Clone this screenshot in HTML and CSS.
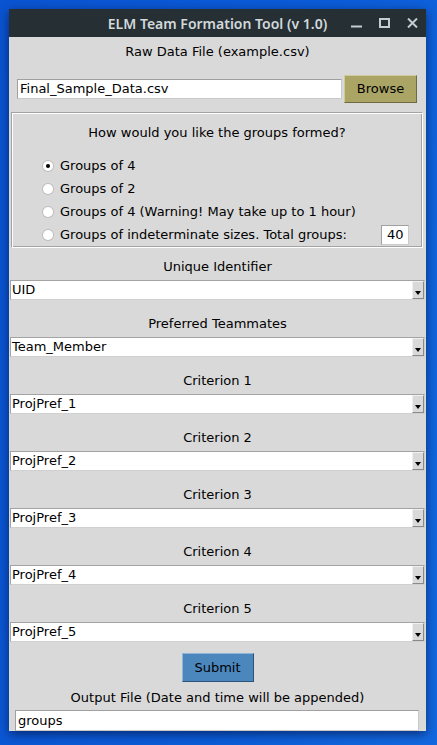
FILE: index.html
```html
<!DOCTYPE html>
<html>
<head>
<meta charset="utf-8">
<link rel="stylesheet" href="styles.css">
</head>
<body>
<div class="window">
  <div class="titlebar">
    <div></div>
    <div class="title">ELM Team Formation Tool (v 1.0)</div>
    <div class="controls">
      <svg class="ctl" width="11" height="10" viewBox="0 0 11 10"><rect x="0" y="7.5" width="11" height="2" fill="#c5cdd1"/></svg>
      <svg class="ctl" width="11" height="10" viewBox="0 0 11 10"><rect x="1" y="1" width="9" height="8" fill="none" stroke="#c5cdd1" stroke-width="2"/></svg>
      <svg class="ctl" width="11" height="10" viewBox="0 0 11 10"><path d="M1 0.5 L10 9.5 M10 0.5 L1 9.5" stroke="#c5cdd1" stroke-width="2" fill="none"/></svg>
    </div>
  </div>
  <div class="content">
    <div class="lbl first">Raw Data File (example.csv)</div>
    <div class="filerow">
      <div class="entry file">Final_Sample_Data.csv</div>
      <div class="btn browse">Browse</div>
    </div>
    <div class="frame">
      <div class="frame-head">How would you like the groups formed?</div>
      <div class="radio"><span class="dot on"></span><span>Groups of 4</span></div>
      <div class="radio"><span class="dot"></span><span>Groups of 2</span></div>
      <div class="radio"><span class="dot"></span><span>Groups of 4 (Warning! May take up to 1 hour)</span></div>
      <div class="radio"><span class="dot"></span><span class="grow">Groups of indeterminate sizes. Total groups:</span><span class="entry num">40</span></div>
    </div>
    <div class="group"><div class="lbl">Unique Identifier</div><div class="combo"><span class="val">UID</span><span class="arrow"></span></div></div>
    <div class="group"><div class="lbl">Preferred Teammates</div><div class="combo"><span class="val">Team_Member</span><span class="arrow"></span></div></div>
    <div class="group"><div class="lbl">Criterion 1</div><div class="combo"><span class="val">ProjPref_1</span><span class="arrow"></span></div></div>
    <div class="group"><div class="lbl">Criterion 2</div><div class="combo"><span class="val">ProjPref_2</span><span class="arrow"></span></div></div>
    <div class="group"><div class="lbl">Criterion 3</div><div class="combo"><span class="val">ProjPref_3</span><span class="arrow"></span></div></div>
    <div class="group"><div class="lbl">Criterion 4</div><div class="combo"><span class="val">ProjPref_4</span><span class="arrow"></span></div></div>
    <div class="group"><div class="lbl">Criterion 5</div><div class="combo"><span class="val">ProjPref_5</span><span class="arrow"></span></div></div>
    <div class="submit-row"><div class="btn submit">Submit</div></div>
    <div class="lbl out">Output File (Date and time will be appended)</div>
    <div class="entry output">groups</div>
  </div>
</div>
</body>
</html>
```

FILE: styles.css
```css
html, body {
  margin: 0;
  padding: 0;
}
body {
  width: 437px;
  height: 745px;
  overflow: hidden;
  background: linear-gradient(100deg, #0a54d2 0%, #0b5cd8 60%, #1368e0 100%);
  font-family: "DejaVu Sans", sans-serif;
  font-size: 13px;
  color: #000;
}
.window {
  margin: 9px 0 0 9px;
  width: 417px;
  background: #d9d9d9;
  box-shadow: 0 3px 10px rgba(0, 0, 30, 0.55);
}
.titlebar {
  height: 28px;
  background: #262f34;
  display: grid;
  grid-template-columns: 1fr auto 1fr;
  align-items: center;
}
.title {
  color: #d2d9dc;
  font-family: "Noto Sans", "DejaVu Sans", sans-serif;
  font-weight: 600;
  font-size: 14px;
}
.controls {
  display: flex;
  justify-content: flex-end;
  align-items: center;
  gap: 17px;
  padding-right: 8px;
}
.ctl {
  display: block;
}
.content {
  display: flex;
  flex-direction: column;
}
.lbl {
  height: 20px;
  line-height: 20px;
  text-align: center;
}
.lbl.first {
  margin-top: 5px;
}
.filerow {
  display: flex;
  align-items: center;
  margin-top: 13px;
  height: 28px;
  padding-left: 8px;
}
.entry {
  background: #fff;
  border: 1px solid #a0a0a0;
  border-bottom-color: #c9c9c9;
  border-right-color: #c9c9c9;
  box-sizing: border-box;
  height: 20px;
  line-height: 18px;
  padding-left: 2px;
  white-space: nowrap;
}
.entry.file {
  width: 325px;
}
.btn {
  box-sizing: border-box;
  height: 28px;
  line-height: 26px;
  text-align: center;
  border: 1px solid;
}
.browse {
  margin-left: 2px;
  width: 73px;
  background: #aba565;
  border-color: #cfcb9c #6f6b3e #6f6b3e #cfcb9c;
}
.frame {
  margin: 9px 3px 0 2px;
  height: 136px;
  box-sizing: border-box;
  border: 1px solid;
  border-color: #a3a3a3 #fff #fff #a3a3a3;
  box-shadow: inset 1px 1px #fff, inset -1px -1px #a3a3a3;
  padding-top: 10px;
}
.frame-head {
  height: 20px;
  line-height: 20px;
  text-align: center;
  margin-bottom: 11px;
}
.radio {
  display: flex;
  align-items: center;
  height: 23px;
  padding-left: 31px;
  padding-right: 13px;
}
.dot {
  width: 10px;
  height: 10px;
  border-radius: 50%;
  background: radial-gradient(circle at 60% 60%, #ffffff 55%, #ececec 100%);
  box-shadow: 0 0 0 1px #bdbdbd;
  margin-right: 7px;
  position: relative;
  flex: none;
}
.dot.on::after {
  content: "";
  position: absolute;
  left: 3px;
  top: 3px;
  width: 4px;
  height: 4px;
  border-radius: 50%;
  background: #000;
}
.grow {
  flex: 1;
}
.entry.num {
  width: 28px;
  padding-left: 5px;
}
.group {
  display: flex;
  flex-direction: column;
  margin-top: 14px;
}
.frame + .group {
  margin-top: 9px;
}
.combo {
  margin: 3px 1px 0 1px;
  height: 20px;
  box-sizing: border-box;
  background: #fff;
  border: 1px solid #a3a3a3;
  border-bottom-color: #d0d0d0;
  border-right-color: #d0d0d0;
  display: flex;
  align-items: stretch;
}
.val {
  flex: 1;
  line-height: 18px;
  padding-left: 1px;
}
.arrow {
  width: 12px;
  background: #d9d9d9;
  box-sizing: border-box;
  border: 1px solid;
  border-color: #f0f0f0 #8a8a8a #8a8a8a #f0f0f0;
  position: relative;
}
.arrow::after {
  content: "";
  position: absolute;
  left: 2px;
  bottom: 3px;
  border-left: 3.5px solid transparent;
  border-right: 3.5px solid transparent;
  border-top: 4px solid #000;
}
.submit-row {
  display: flex;
  justify-content: center;
  margin-top: 11px;
}
.submit {
  width: 72px;
  height: 29px;
  line-height: 27px;
  background: #4b87bd;
  border-color: #8fb4d8 #2b5278 #2b5278 #8fb4d8;
}
.lbl.out {
  margin-top: 6px;
}
.entry.output {
  margin: 2px 7px 0 6px;
  height: 21px;
  line-height: 19px;
}
```
